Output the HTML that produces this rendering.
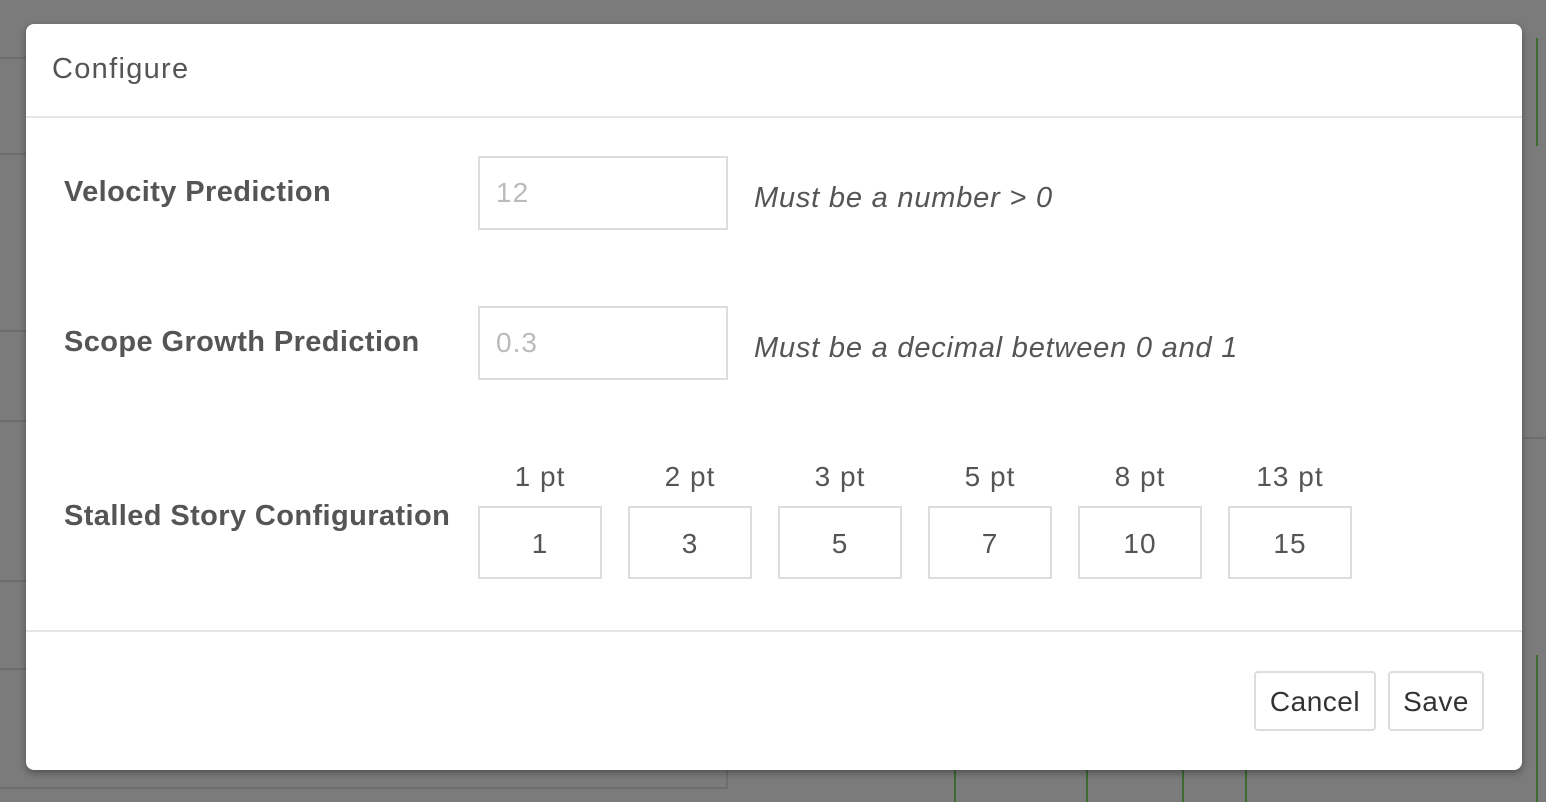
<!DOCTYPE html>
<html><head><style>
body{margin:0;width:1546px;height:802px;background:#7b7b7b;position:relative;overflow:hidden;font-family:"Liberation Sans",sans-serif;color:#555}
.bgl{position:absolute;background:#6e6e6e}
.modal{position:absolute;left:26px;top:24px;width:1496px;height:746px;background:#fff;border-radius:8px;box-shadow:0 3px 8px rgba(0,0,0,.35)}
.hr{position:absolute;left:0;right:0;height:2px;background:#e5e5e5}
.t{position:absolute;white-space:nowrap}
.lbl{font-weight:bold;font-size:29px;color:#555;letter-spacing:0.4px}
.inp{position:absolute;border:2px solid #ddd;box-sizing:border-box;font-size:28px;color:#bbb;letter-spacing:1px}
.box{position:absolute;width:124px;height:73px;border:2px solid #ddd;box-sizing:border-box;text-align:center;line-height:71px;font-size:28px;color:#555;letter-spacing:1px}
.pt{position:absolute;width:124px;text-align:center;font-size:28px;color:#555;letter-spacing:1px}
.help{font-style:italic;font-size:29px;color:#555;letter-spacing:0.8px}
.btn{position:absolute;top:647px;height:60px;border:2px solid #ddd;border-radius:4px;box-sizing:border-box;font-size:28px;color:#333;line-height:58px;text-align:center;letter-spacing:0.5px}
</style></head><body>
<div class="bgl" style="left:0;top:57px;width:26px;height:2px"></div>
<div class="bgl" style="left:0;top:153px;width:26px;height:2px"></div>
<div class="bgl" style="left:0;top:330px;width:26px;height:2px"></div>
<div class="bgl" style="left:0;top:420px;width:26px;height:2px"></div>
<div class="bgl" style="left:0;top:580px;width:26px;height:2px"></div>
<div class="bgl" style="left:0;top:668px;width:26px;height:2px"></div>
<div class="bgl" style="left:1522px;top:437px;width:24px;height:2px"></div>
<div style="position:absolute;left:1536px;top:38px;width:2px;height:108px;background:#3d6b30"></div>
<div style="position:absolute;left:1536px;top:655px;width:2px;height:147px;background:#3d6b30"></div>
<div style="position:absolute;left:1245px;top:770px;width:2px;height:32px;background:#3d6b30"></div>
<div style="position:absolute;left:1182px;top:770px;width:2px;height:32px;background:#3d6b30"></div>
<div style="position:absolute;left:1086px;top:770px;width:2px;height:32px;background:#3d6b30"></div>
<div style="position:absolute;left:954px;top:770px;width:2px;height:32px;background:#3d6b30"></div>
<div style="position:absolute;left:0;top:787px;width:727px;height:2px;background:#6e6e6e"></div>
<div style="position:absolute;left:726px;top:770px;width:2px;height:19px;background:#6e6e6e"></div>
<div class="modal">
  <div class="t" style="left:26px;top:29px;font-size:29px;color:#555;letter-spacing:1.3px">Configure</div>
  <div class="hr" style="top:92px"></div>
  <div class="t lbl" style="left:38px;top:152px">Velocity Prediction</div>
  <div class="inp" style="left:452px;top:132px;width:250px;height:74px;padding:19px 0 0 16px">12</div>
  <div class="t help" style="left:728px;top:158px">Must be a number &gt; 0</div>
  <div class="t lbl" style="left:38px;top:302px">Scope Growth Prediction</div>
  <div class="inp" style="left:452px;top:282px;width:250px;height:74px;padding:19px 0 0 16px">0.3</div>
  <div class="t help" style="left:728px;top:308px">Must be a decimal between 0 and 1</div>
  <div class="t lbl" style="left:38px;top:476px">Stalled Story Configuration</div>
  <div class="pt" style="left:452px;top:437px">1 pt</div><div class="box" style="left:452px;top:482px">1</div>
  <div class="pt" style="left:602px;top:437px">2 pt</div><div class="box" style="left:602px;top:482px">3</div>
  <div class="pt" style="left:752px;top:437px">3 pt</div><div class="box" style="left:752px;top:482px">5</div>
  <div class="pt" style="left:902px;top:437px">5 pt</div><div class="box" style="left:902px;top:482px">7</div>
  <div class="pt" style="left:1052px;top:437px">8 pt</div><div class="box" style="left:1052px;top:482px">10</div>
  <div class="pt" style="left:1202px;top:437px">13 pt</div><div class="box" style="left:1202px;top:482px">15</div>
  <div class="hr" style="top:606px"></div>
  <div class="btn" style="left:1228px;width:122px">Cancel</div>
  <div class="btn" style="left:1362px;width:96px">Save</div>
</div>
</body></html>
